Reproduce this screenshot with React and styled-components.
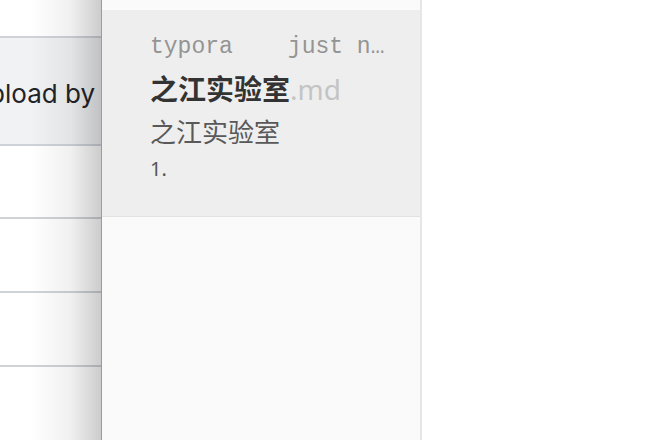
import React from 'react';
import styled, { createGlobalStyle } from 'styled-components';

const GlobalStyle = createGlobalStyle`
  html, body {
    margin: 0;
    padding: 0;
    background: #ffffff;
  }
  #root {
    width: 652px;
    height: 440px;
    overflow: hidden;
  }
`

const Page = styled.div`
  display: flex;
  width: 652px;
  height: 440px;
  background: #ffffff;
`

const BackPane = styled.div`
  position: relative;
  width: 101px;
  flex-shrink: 0;
  background: #ffffff;
  border-right: 1px solid #9c9c9c;
  overflow: hidden;
  display: flex;
  flex-direction: column;

  &::after {
    content: '';
    position: absolute;
    inset: 0;
    background: linear-gradient(to right, rgba(0,0,0,0) 30%, rgba(0,0,0,0.06) 70%, rgba(0,0,0,0.2) 100%);
    pointer-events: none;
  }
`

const BackHeader = styled.div`
  height: 36px;
`

const BackRow = styled.div`
  height: ${p => p.$h}px;
  border-top: 2px solid #cfd3d8;
  background: ${p => (p.$active ? '#f1f2f4' : 'transparent')};
  display: flex;
  align-items: center;
  justify-content: flex-end;
  padding: 4px 6px 0 0;
  box-sizing: border-box;
  white-space: nowrap;
  overflow: hidden;
`

const BackLabel = styled.span`
  font-family: Inter, "Liberation Sans", sans-serif;
  font-size: 26px;
  color: #222427;
  flex-shrink: 0;
`

const FileList = styled.div`
  width: 318px;
  flex-shrink: 0;
  background: #fafafa;
  border-right: 2px solid #e6e6e6;
  padding-top: 10px;
  box-sizing: content-box;
`

const FileItem = styled.div`
  height: 207px;
  background: #eeeeee;
  border-bottom: 1px solid #e2e2e2;
  padding: 22px 26px 0 48px;
  box-sizing: border-box;
  display: flex;
  flex-direction: column;
`

const Meta = styled.div`
  display: flex;
  font-family: "Liberation Mono", "DejaVu Sans Mono", monospace;
  font-size: 23px;
  line-height: 30px;
  color: #949494;
  white-space: nowrap;
`

const Folder = styled.span`
  flex-shrink: 0;
  margin-right: 55px;
`

const Time = styled.span`
  overflow: hidden;
  text-overflow: ellipsis;
  min-width: 0;
`

const Title = styled.div`
  margin-top: 10px;
  font-family: "Noto Sans CJK SC", "Noto Sans", sans-serif;
  font-size: 28px;
  line-height: 32px;
  font-weight: 700;
  color: #333333;
`

const Ext = styled.span`
  font-family: "Noto Sans", "Liberation Sans", sans-serif;
  font-weight: 400;
  color: #c4c4c4;
`

const Preview = styled.div`
  margin-top: 10px;
  font-family: "Noto Sans CJK SC", "Noto Sans", sans-serif;
  font-size: 26px;
  line-height: 32px;
  color: #595959;
`

const Snippet = styled.div`
  margin-top: 10px;
  font-family: "Noto Sans", "Liberation Sans", sans-serif;
  font-size: 20px;
  line-height: 24px;
  color: #555555;
`

export default function App() {
  return (
    <>
      <GlobalStyle />
      <Page>
        <BackPane>
          <BackHeader />
          <BackRow $h={108} $active>
            <BackLabel>Upload by</BackLabel>
          </BackRow>
          <BackRow $h={73} />
          <BackRow $h={74} />
          <BackRow $h={74} />
          <BackRow $h={74} />
        </BackPane>
        <FileList>
          <FileItem>
            <Meta>
              <Folder>typora</Folder>
              <Time>just now</Time>
            </Meta>
            <Title>
              之江实验室<Ext>.md</Ext>
            </Title>
            <Preview>之江实验室</Preview>
            <Snippet>1.</Snippet>
          </FileItem>
        </FileList>
      </Page>
    </>
  );
}
